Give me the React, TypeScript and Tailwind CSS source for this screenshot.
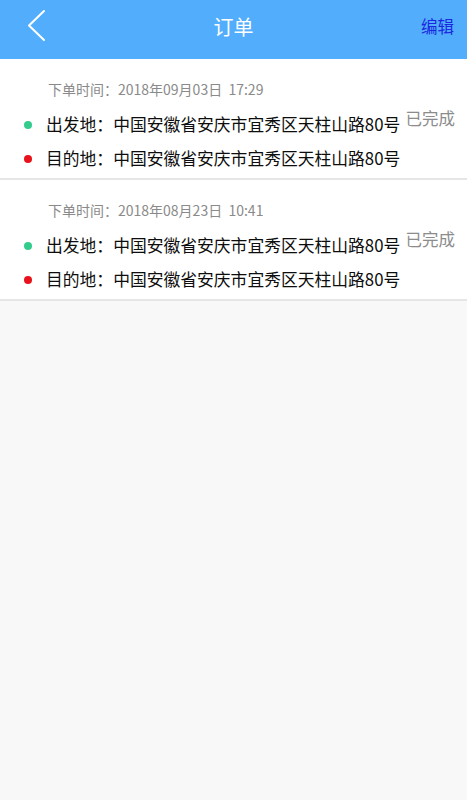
import React from 'react'

interface Order {
  time: string
  from: string
  to: string
  status: string
}

const orders: Order[] = [
  { time: '2018年09月03日  17:29', from: '中国安徽省安庆市宜秀区天柱山路80号', to: '中国安徽省安庆市宜秀区天柱山路80号', status: '已完成' },
  { time: '2018年08月23日  10:41', from: '中国安徽省安庆市宜秀区天柱山路80号', to: '中国安徽省安庆市宜秀区天柱山路80号', status: '已完成' },
]

const font = { fontFamily: '"Noto Sans CJK SC", "Noto Sans", sans-serif' }

function OrderCard({ order }: { order: Order }) {
  return (
    <div className="bg-white border-b-2 border-[#e6e6e6] pl-6 pr-3 pt-5 pb-[2px]">
      <div className="ml-6 h-5 text-[14px] leading-5 text-[#8a8a8a] whitespace-pre">下单时间：{order.time}</div>
      <div className="mt-[9px] flex h-[34px] items-center">
        <span className="h-2 w-2 rounded-full bg-[#33cc8c]" />
        <span className="ml-[14px] text-[16.8px] text-[#0d0d0d] whitespace-nowrap">出发地：{order.from}</span>
        <span className="ml-auto self-start text-[16.5px] leading-5 text-[#8c8c8c]">{order.status}</span>
      </div>
      <div className="flex h-[34px] items-center">
        <span className="h-2 w-2 rounded-full bg-[#e8121b]" />
        <span className="ml-[14px] text-[16.8px] text-[#0d0d0d] whitespace-nowrap">目的地：{order.to}</span>
      </div>
    </div>
  )
}

export default function App() {
  return (
    <div className="min-h-screen w-full bg-[#f8f8f8]" style={font}>
      <div className="relative flex h-[59px] items-center justify-center bg-[#52aefc] pb-[6px]">
        <button className="absolute left-0 top-0 flex h-full w-[60px] items-center justify-center">
          <svg width="60" height="59" viewBox="0 0 60 59" fill="none">
            <polyline points="44,11 29,25.5 44,40" stroke="#fff" strokeWidth="2" strokeLinecap="round" strokeLinejoin="round" />
          </svg>
        </button>
        <h1 className="text-[20px] text-white">订单</h1>
        <button className="absolute right-[13px] top-0 flex h-full items-center pb-[6px] text-[16.5px] text-[#1a28e0]">编辑</button>
      </div>
      {orders.map((o, i) => (
        <OrderCard key={i} order={o} />
      ))}
    </div>
  )
}
